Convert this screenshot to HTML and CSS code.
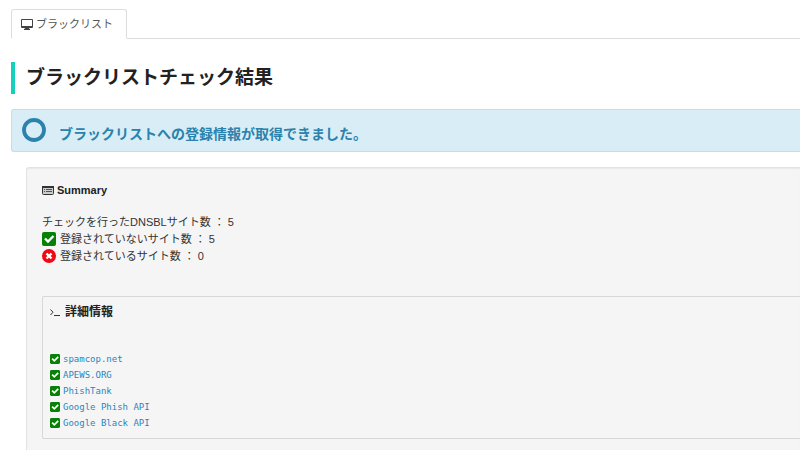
FILE: index.html
```html
<!DOCTYPE html>
<html lang="ja">
<head>
<meta charset="utf-8">
<meta name="viewport" content="width=device-width, initial-scale=1">
<title>ブラックリストチェック結果</title>
<link rel="stylesheet" href="styles.css">
</head>
<body>
<svg class="defs" aria-hidden="true">
  <symbol id="check" viewBox="0 0 14 14">
    <rect width="14" height="14" rx="2" fill="#078007"/>
    <path d="M3 6.5l3 3 5.5-5.5" fill="none" stroke="#fff" stroke-width="2.4"/>
  </symbol>
</svg>
<nav class="tabs">
  <a class="tab" href="#result">
    <svg class="icon-tab" viewBox="0 0 12 11" aria-hidden="true">
      <path fill="#444" fill-rule="evenodd" d="M1 0h10a1 1 0 0 1 1 1v7a1 1 0 0 1-1 1H8l.5 1H9v1H3v-1h.5L4 9H1a1 1 0 0 1-1-1V1a1 1 0 0 1 1-1zM1 1v6h10V1z"/>
    </svg>
    <span>ブラックリスト</span>
  </a>
</nav>
<main id="result" class="result">
  <h1 class="title">ブラックリストチェック結果</h1>
  <div class="alert" role="status">
    <svg class="icon-ring" viewBox="0 0 24 24" aria-hidden="true"><circle cx="12" cy="12" r="10" fill="none" stroke="#2a82ad" stroke-width="3.8"/></svg>
    <strong class="message">ブラックリストへの登録情報が取得できました。</strong>
  </div>
  <section class="well">
    <h2 class="heading">
      <svg class="icon-summary" viewBox="0 0 12 10" aria-hidden="true">
        <rect x=".5" y=".5" width="11" height="8" rx="1" fill="#ccc" stroke="#333"/>
        <path d="M0 1h12" stroke="#333" stroke-width="2"/>
        <path d="M2 3.5h1m1 0h6M2 5.5h1m1 0h6" stroke="#555"/>
      </svg>
      <span>Summary</span>
    </h2>
    <ul class="counts">
      <li>チェックを行ったDNSBLサイト数 ： 5</li>
      <li><svg class="icon-count" aria-hidden="true"><use href="#check"/></svg>登録されていないサイト数 ： 5</li>
      <li><svg class="icon-count" viewBox="0 0 14 14" aria-hidden="true"><circle cx="7" cy="7" r="7" fill="#f00912"/><path d="M4.5 4.5l5 5m0-5l-5 5" stroke="#fff" stroke-width="2.4"/></svg>登録されているサイト数 ： 0</li>
    </ul>
    <section class="details">
      <h3 class="heading heading-details">
        <svg class="icon-prompt" viewBox="0 0 10 9" aria-hidden="true"><path d="M.5 1.5L3 4.2.5 7M4 7.5h6" fill="none" stroke="#333"/></svg>
        <span>詳細情報</span>
      </h3>
      <ul class="sites">
        <li><svg class="icon-site" aria-hidden="true"><use href="#check"/></svg><a href="#spamcop">spamcop.net</a></li>
        <li><svg class="icon-site" aria-hidden="true"><use href="#check"/></svg><a href="#apews">APEWS.ORG</a></li>
        <li><svg class="icon-site" aria-hidden="true"><use href="#check"/></svg><a href="#phishtank">PhishTank</a></li>
        <li><svg class="icon-site" aria-hidden="true"><use href="#check"/></svg><a href="#google-phish">Google Phish API</a></li>
        <li><svg class="icon-site" aria-hidden="true"><use href="#check"/></svg><a href="#google-black">Google Black API</a></li>
      </ul>
    </section>
  </section>
</main>
</body>
</html>
```
FILE: styles.css
```css
* {
  box-sizing: border-box;
}

body {
  margin: 0;
  padding: 9px 0 0 11px;
  overflow-x: hidden;
  background: #fff;
  color: #333;
  font: 11px/17px "Liberation Sans", "Noto Sans CJK JP", sans-serif;
}

h1, h2, h3, ul {
  margin: 0;
  padding: 0;
}

ul {
  list-style: none;
}

svg {
  flex: none;
}

.defs {
  position: absolute;
  width: 0;
  height: 0;
}

.tabs {
  display: flex;
  border-bottom: 1px solid #ddd;
}

.tab {
  display: flex;
  align-items: center;
  gap: 3px;
  height: 30px;
  margin-bottom: -1px;
  padding: 0 13px 0 9px;
  border: 1px solid #ddd;
  border-bottom-color: #fff;
  border-radius: 3px 3px 0 0;
  background: #fff;
  color: #555;
  text-decoration: none;
}

.icon-tab {
  width: 12px;
  height: 11px;
}

.title {
  margin: 23px 0 15px;
  padding-left: 11px;
  border-left: 4px solid #14d0bc;
  color: #222;
  font-size: 19px;
  line-height: 32px;
}

.alert {
  display: flex;
  gap: 13px;
  height: 43px;
  padding: 8px 10px;
  border: 1px solid #bce3ec;
  border-right: 0;
  border-radius: 3px 0 0 3px;
  background: #d9edf7;
  color: #2a82ad;
}

.icon-ring {
  width: 24px;
  height: 24px;
}

.message {
  padding-top: 6px;
  font-size: 14px;
  line-height: 20px;
}

.well {
  margin: 15px 0 0 15px;
  padding: 14px 0 20px 15px;
  border: 1px solid #e3e3e3;
  border-right: 0;
  border-radius: 3px 0 0 0;
  background: #f5f5f5;
  box-shadow: inset 0 1px 1px #e8e8e8;
}

.heading {
  display: flex;
  align-items: center;
  gap: 3px;
  color: #222;
  font-size: 11px;
  line-height: 17px;
}

.icon-summary {
  width: 12px;
  height: 10px;
}

.counts {
  margin: 15px 0 31px;
}

.counts li {
  display: flex;
  align-items: center;
  gap: 4px;
}

.icon-count {
  width: 14px;
  height: 14px;
  margin-bottom: 2px;
}

.details {
  padding: 7px 0 7px 7px;
  border: 1px solid #d7d7d7;
  border-right: 0;
  border-radius: 2px 0 0 2px;
}

.heading-details {
  gap: 5px;
  font-size: 12px;
}

.icon-prompt {
  width: 10px;
  height: 9px;
}

.sites {
  margin-top: 30px;
  font: 9px/16px "DejaVu Sans Mono", monospace;
}

.sites li {
  display: flex;
  align-items: center;
  gap: 3px;
}

.sites a {
  color: #1f86c4;
  text-decoration: none;
}

.icon-site {
  display: block;
  width: 10px;
  height: 10px;
}
```
